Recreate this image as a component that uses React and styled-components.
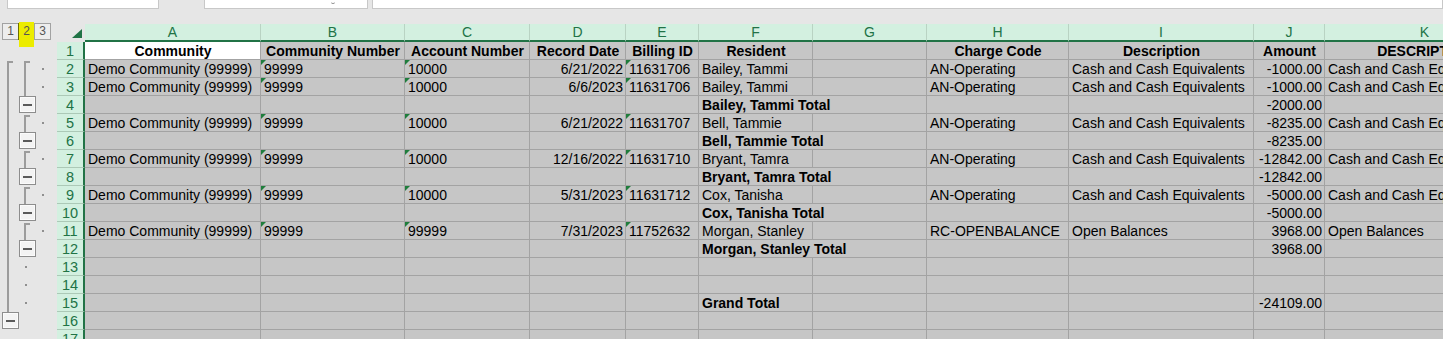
import React from 'react';
import styled, { createGlobalStyle, css } from 'styled-components';

const GlobalStyle = createGlobalStyle`
  html, body { margin: 0; padding: 0; background: #e6e6e6; }
  body { font-family: 'Liberation Sans', Arial, sans-serif; overflow: hidden; }
`;

const COLS = '57px 28px 176px 144px 125px 96px 73px 114px 114px 142px 185px 71px 200px';
const LETTERS = ['A', 'B', 'C', 'D', 'E', 'F', 'G', 'H', 'I', 'J', 'K'];

const Page = styled.div`
  width: 1443px;
  height: 339px;
  overflow: hidden;
  background: #e6e6e6;
`;

const TopBar = styled.div`
  display: flex;
  height: 9px;
`;

const InputBox = styled.div`
  box-sizing: border-box;
  height: 9px;
  background: #fff;
  border: 1px solid #c8c8c8;
  border-top: none;
  margin-left: ${(p) => p.$ml}px;
  width: ${(p) => (p.$w ? `${p.$w}px` : 'auto')};
  flex: ${(p) => (p.$w ? '0 0 auto' : '1 1 auto')};
  display: flex;
  justify-content: flex-end;
`;

const Chevron = styled.span`
  width: 4px;
  height: 2px;
  margin: 1px 32px 0 0;
  border-bottom: 1px solid #8a8a8a;
  border-radius: 0 0 3px 3px;
`;

const Spacer = styled.div`
  height: 15px;
`;

const Sheet = styled.div`
  display: flex;
  flex-direction: column;
`;

const SheetRow = styled.div`
  display: grid;
  grid-template-columns: ${COLS};
  height: 18px;
`;

/* ---------- gutter / outline ---------- */

const Gutter = styled.div`
  display: grid;
  grid-template-columns: 19px 17px 21px;
  height: 18px;
  background: #e6e6e6;
`;

const LINE = '#9c9c9c';

const Slot = styled.div`
  height: 18px;
`;

const Segment = styled.div`
  box-sizing: border-box;
  margin-left: ${(p) => p.$off}px;
  ${(p) =>
    p.$kind === 'mid' &&
    css`
      width: 2px;
      height: 18px;
      background: ${LINE};
    `}
  ${(p) =>
    p.$kind === 'start' &&
    css`
      margin-top: 1px;
      width: 6px;
      height: 17px;
      border-left: 2px solid ${LINE};
      border-top: 2px solid ${LINE};
    `}
  ${(p) =>
    p.$kind === 'dot' &&
    css`
      margin-top: 8px;
      width: 2px;
      height: 2px;
      background: #8f8f8f;
    `}
`;

const MinusBox = styled.div`
  box-sizing: border-box;
  margin-left: ${(p) => p.$off}px;
  width: 17px;
  height: 17px;
  border: 1px solid #8d8d8d;
  background: #f3f3f3;
  box-shadow: inset 0 0 0 1px #fbfbfb;
  display: flex;
  align-items: center;
  justify-content: center;
  &::after {
    content: '';
    width: 9px;
    height: 2px;
    background: #5a5a5a;
  }
`;

const LevelGroup = styled.div`
  grid-column: span 3;
  display: flex;
  padding-left: 2px;
  margin-top: -1px;
`;

const LevelButton = styled.div`
  position: relative;
  box-sizing: border-box;
  width: 17px;
  height: 17px;
  margin-left: ${(p) => (p.$first ? 0 : -1)}px;
  border: 1px solid #a2a2a2;
  background: ${(p) => (p.$hl ? '#ecec00' : '#ededed')};
  color: #555;
  font-size: 12px;
  line-height: 15px;
  text-align: center;
  ${(p) =>
    p.$hl &&
    css`
      border-color: #6e6e00;
      &::before {
        content: '';
        position: absolute;
        left: 0;
        right: 0;
        top: -2px;
        bottom: -8px;
        background: #ecec00;
        z-index: 0;
      }
    `}
`;

const LevelText = styled.span`
  position: relative;
  z-index: 1;
`;

/* ---------- headers ---------- */

const Corner = styled.div`
  background: #e6e6e6;
  display: flex;
  align-items: flex-start;
  justify-content: flex-end;
  padding: 5px 3px 0 0;
  box-sizing: border-box;
`;

const ColHeader = styled.div`
  box-sizing: border-box;
  height: 18px;
  background: #d3f0e0;
  border-right: 1px solid #b9d3c3;
  border-bottom: 2px solid #217346;
  color: #217346;
  font-size: 14px;
  line-height: 16px;
  text-align: center;
  white-space: nowrap;
  overflow: hidden;
`;

const RowHeader = styled.div`
  box-sizing: border-box;
  height: 18px;
  padding-top: 1px;
  background: #d3f0e0;
  border-right: 2px solid #217346;
  border-bottom: 1px solid #acc9b7;
  color: #217346;
  font-size: 14.5px;
  line-height: 17px;
  text-align: center;
  overflow: hidden;
`;

/* ---------- cells ---------- */

const Cell = styled.div`
  position: relative;
  box-sizing: border-box;
  height: 18px;
  padding: 1px 2px 0 3px;
  background: ${(p) => (p.$white ? '#ffffff' : '#c6c6c6')};
  border-right: 1px solid #a3a3a3;
  border-bottom: 1px solid #a3a3a3;
  color: #000;
  font-size: 14px;
  line-height: 17px;
  font-weight: ${(p) => (p.$bold ? 700 : 400)};
  text-align: ${(p) => p.$align || 'left'};
  white-space: nowrap;
  overflow: hidden;
  grid-column: ${(p) => (p.$span ? `span ${p.$span}` : 'auto')};
  ${(p) =>
    p.$flag &&
    css`
      &::before {
        content: '';
        position: absolute;
        left: 0;
        top: 0;
        border-top: 5px solid #1f7d3c;
        border-right: 5px solid transparent;
      }
    `}
`;

/* ---------- data ---------- */

const EQ = 'Cash and Cash Equivalents';

const detail = (date, bid, name, amt) => [
  { t: 'Demo Community (99999)' },
  { t: '99999', flag: true },
  { t: '10000', flag: true },
  { t: date, align: 'right' },
  { t: bid, flag: true },
  { t: name },
  { t: '' },
  { t: 'AN-Operating' },
  { t: EQ },
  { t: amt, align: 'right' },
  { t: EQ },
];

const total = (label, amt, span = 2) => {
  const cells = [{ t: '' }, { t: '' }, { t: '' }, { t: '' }, { t: '' }, { t: label, bold: true, span }];
  if (span === 1) cells.push({ t: '' });
  cells.push({ t: '' }, { t: '' }, { t: amt, align: 'right' }, { t: '' });
  return cells;
};

const empty = () => LETTERS.map(() => ({ t: '' }));

const headerCells = [
  { t: 'Community', white: true },
  { t: 'Community Number' },
  { t: 'Account Number' },
  { t: 'Record Date' },
  { t: 'Billing ID' },
  { t: 'Resident' },
  { t: '' },
  { t: 'Charge Code' },
  { t: 'Description' },
  { t: 'Amount' },
  { t: 'DESCRIPTION' },
].map((c) => ({ ...c, bold: true, align: 'center' }));

const morgan = [
  { t: 'Demo Community (99999)' },
  { t: '99999', flag: true },
  { t: '99999', flag: true },
  { t: '7/31/2023', align: 'right' },
  { t: '11752632', flag: true },
  { t: 'Morgan, Stanley' },
  { t: '' },
  { t: 'RC-OPENBALANCE' },
  { t: 'Open Balances' },
  { t: '3968.00', align: 'right' },
  { t: 'Open Balances' },
];

// gutter: [slot1, slot2, slot3]
const rows = [
  { n: 1, g: [null, null, null], cells: headerCells },
  { n: 2, g: ['start', 'start', 'dot'], cells: detail('6/21/2022', '11631706', 'Bailey, Tammi', '-1000.00') },
  { n: 3, g: ['mid', 'mid', 'dot'], cells: detail('6/6/2023', '11631706', 'Bailey, Tammi', '-1000.00') },
  { n: 4, g: ['mid', 'button', null], cells: total('Bailey, Tammi Total', '-2000.00') },
  { n: 5, g: ['mid', 'start', 'dot'], cells: detail('6/21/2022', '11631707', 'Bell, Tammie', '-8235.00') },
  { n: 6, g: ['mid', 'button', null], cells: total('Bell, Tammie Total', '-8235.00') },
  { n: 7, g: ['mid', 'start', 'dot'], cells: detail('12/16/2022', '11631710', 'Bryant, Tamra', '-12842.00') },
  { n: 8, g: ['mid', 'button', null], cells: total('Bryant, Tamra Total', '-12842.00') },
  { n: 9, g: ['mid', 'start', 'dot'], cells: detail('5/31/2023', '11631712', 'Cox, Tanisha', '-5000.00') },
  { n: 10, g: ['mid', 'button', null], cells: total('Cox, Tanisha Total', '-5000.00') },
  { n: 11, g: ['mid', 'start', 'dot'], cells: morgan },
  { n: 12, g: ['mid', 'button', null], cells: total('Morgan, Stanley Total', '3968.00') },
  { n: 13, g: ['mid', 'dot', null], cells: empty() },
  { n: 14, g: ['mid', 'dot', null], cells: empty() },
  { n: 15, g: ['mid', 'dot', null], cells: total('Grand Total', '-24109.00', 1) },
  { n: 16, g: ['button', null, null], cells: empty() },
  { n: 17, g: [null, null, null], cells: empty() },
];

const OFFSETS = [
  { line: 7, button: 2, dot: 8 },
  { line: 5, button: 0, dot: 6 },
  { line: 5, button: 0, dot: 6 },
];

function GutterSlot({ kind, level }) {
  const off = OFFSETS[level];
  if (!kind) return <Slot />;
  if (kind === 'button') {
    return (
      <Slot>
        <MinusBox $off={off.button} />
      </Slot>
    );
  }
  return (
    <Slot>
      <Segment $kind={kind} $off={kind === 'dot' ? off.dot : off.line} />
    </Slot>
  );
}

function SelectAllTriangle() {
  return (
    <svg width="10" height="9" viewBox="0 0 10 9">
      <polygon points="10,0 10,9 0,9" fill="#217346" />
    </svg>
  );
}

export default function App() {
  return (
    <Page>
      <GlobalStyle />
      <TopBar>
        <InputBox $ml={7} $w={152} />
        <InputBox $ml={45} $w={164}>
          <Chevron />
        </InputBox>
        <InputBox $ml={4} />
      </TopBar>
      <Spacer />
      <Sheet>
        <SheetRow>
          <Gutter>
            <LevelGroup>
              <LevelButton $first>
                <LevelText>1</LevelText>
              </LevelButton>
              <LevelButton $hl>
                <LevelText>2</LevelText>
              </LevelButton>
              <LevelButton>
                <LevelText>3</LevelText>
              </LevelButton>
            </LevelGroup>
          </Gutter>
          <Corner>
            <SelectAllTriangle />
          </Corner>
          {LETTERS.map((l) => (
            <ColHeader key={l}>{l}</ColHeader>
          ))}
        </SheetRow>
        {rows.map((r) => (
          <SheetRow key={r.n}>
            <Gutter>
              {r.g.map((k, i) => (
                <GutterSlot key={i} kind={k} level={i} />
              ))}
            </Gutter>
            <RowHeader>{r.n}</RowHeader>
            {r.cells.map((c, i) => (
              <Cell
                key={i}
                $align={c.align}
                $bold={c.bold}
                $flag={c.flag}
                $span={c.span}
                $white={c.white}
              >
                {c.t}
              </Cell>
            ))}
          </SheetRow>
        ))}
      </Sheet>
    </Page>
  );
}
